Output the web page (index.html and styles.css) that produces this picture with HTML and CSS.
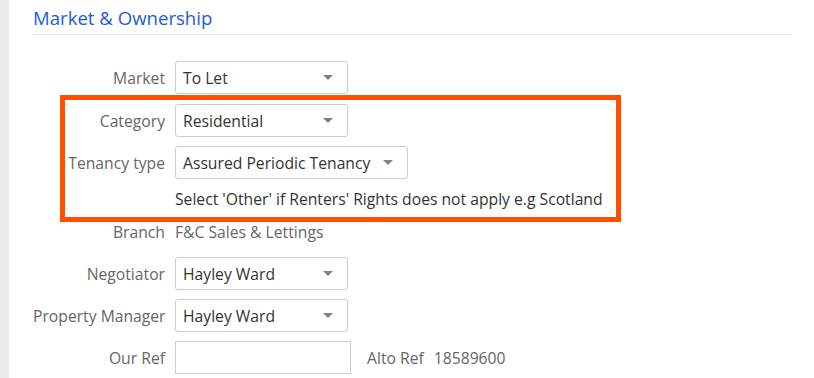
FILE: index.html
```html
<!DOCTYPE html>
<html lang="en">
<head>
    <meta charset="UTF-8">
    <meta name="viewport" content="width=device-width, initial-scale=1.0">
    <title>Market &amp; Ownership</title>
    <link rel="stylesheet" href="styles.css">
</head>
<body>
    <div class="page">
        <div class="section">
            <h2 class="section-title">Market &amp; Ownership</h2>

            <div class="form">
                <div class="form-row">
                    <label class="label">Market</label>
                    <div class="select"><span>To Let</span><span class="caret"></span></div>
                </div>

                <div class="highlight">
                    <div class="form-row">
                        <label class="label">Category</label>
                        <div class="select"><span>Residential</span><span class="caret"></span></div>
                    </div>
                    <div class="form-row">
                        <label class="label">Tenancy type</label>
                        <div class="select select-wide"><span>Assured Periodic Tenancy</span><span class="caret"></span></div>
                    </div>
                    <div class="form-row help-row">
                        <span class="label"></span>
                        <span class="help">Select 'Other' if Renters' Rights does not apply e.g Scotland</span>
                    </div>
                </div>

                <div class="form-row text-row">
                    <label class="label">Branch</label>
                    <span class="value">F&amp;C Sales &amp; Lettings</span>
                </div>

                <div class="form-row spaced">
                    <label class="label">Negotiator</label>
                    <div class="select"><span>Hayley Ward</span><span class="caret"></span></div>
                </div>
                <div class="form-row">
                    <label class="label">Property Manager</label>
                    <div class="select"><span>Hayley Ward</span><span class="caret"></span></div>
                </div>
                <div class="form-row">
                    <label class="label">Our Ref</label>
                    <div class="input"></div>
                    <span class="label-inline">Alto Ref</span>
                    <span class="value">18589600</span>
                </div>
            </div>
        </div>
    </div>
</body>
</html>
```

FILE: styles.css
```css
body {
    font-family: "Open Sans", Arial, sans-serif;
    font-size: 15.7px;
    color: #333;
    background-color: #fff;
    margin: 0;
    padding: 0;
}
.page {
    border-left: 9px solid #ebebeb;
    min-height: 378px;
    box-sizing: border-box;
}
.section {
    padding: 5px 22px 0 24px;
    width: 759px;
}
.section-title {
    margin: 0;
    font-size: 18.6px;
    font-weight: normal;
    line-height: 26px;
    color: #1c5cd6;
    padding-bottom: 3px;
    border-bottom: 1px solid #e2e2e2;
}
.form {
    padding-top: 26px;
}
.form-row {
    display: flex;
    align-items: center;
    margin-bottom: 9px;
}
.label {
    width: 132px;
    text-align: right;
    color: #666;
    margin-right: 10px;
    flex-shrink: 0;
    white-space: nowrap;
}
.select {
    width: 173px;
    height: 33px;
    box-sizing: border-box;
    border: 1px solid #ccc;
    border-radius: 3px;
    display: flex;
    align-items: center;
    justify-content: space-between;
    padding: 0 14px 0 7px;
    color: #333;
}
.select-wide {
    width: 233px;
}
.caret {
    width: 0;
    height: 0;
    border-left: 5px solid transparent;
    border-right: 5px solid transparent;
    border-top: 5px solid #808080;
}
.input {
    width: 176px;
    height: 33px;
    box-sizing: border-box;
    border: 1px solid #ccc;
}
.highlight {
    border: 5px solid #ff4f00;
    margin: -8px 0 0 27px;
    width: 561px;
    box-sizing: border-box;
    padding: 4px 0 8px;
}
.highlight .label {
    width: 100px;
}
.help-row {
    margin: 0;
    line-height: 20px;
    padding-top: 1px;
}
.help {
    color: #333;
    white-space: nowrap;
}
.text-row {
    margin-top: 0;
    line-height: 20px;
}
.value {
    color: #666;
}
.spaced {
    margin-top: 15px;
}
.label-inline {
    color: #666;
    margin: 0 10px 0 16px;
}
```
